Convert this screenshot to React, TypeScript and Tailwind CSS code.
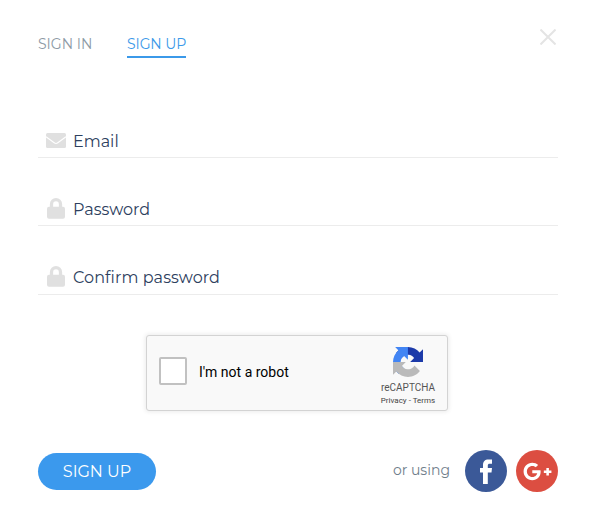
import type { ReactNode } from "react";
import { FaGooglePlusG } from "react-icons/fa";

function Field({ icon, label, className }: { icon: ReactNode; label: ReactNode; className: string }) {
  return (
    <label className={`flex items-start border-b border-[#ececec] pl-2 ${className}`}>
      <span className="flex h-[23px] w-5 shrink-0 items-center justify-center text-[#e0e0e0]">{icon}</span>
      <span className="mt-px ml-[7px] whitespace-nowrap text-base leading-6 text-[#2d405e]">{label}</span>
    </label>
  );
}

function EnvelopeIcon() {
  return (
    <svg viewBox="0 0 20 15" className="h-[15px] w-5">
      <rect width="20" height="15" rx="1.5" fill="currentColor" />
      <path d="M0 3.7l8.2 6.1q1.8 1.3 3.6 0L20 3.7" fill="none" stroke="white" strokeWidth="1.1" />
    </svg>
  );
}

function LockIcon() {
  return (
    <svg viewBox="0 0 18 21" className="h-[21px] w-[18px]">
      <rect y="8.7" width="18" height="12" rx="2" fill="currentColor" />
      <path d="M4.5 10V6.2a4.5 4.5 0 0 1 9 0V10" fill="none" stroke="currentColor" strokeWidth="3.3" />
    </svg>
  );
}

function RecaptchaLogo() {
  return (
    <svg viewBox="0 0 64 64" className="h-[30px] w-[30px]">
      <path fill="#1c3aa9" d="M64 31.955l-.033-1.37V4.687l-7.16 7.16C50.948 4.674 42.033.093 32.05.093c-10.4 0-19.622 4.96-25.458 12.64l11.736 11.86a15.55 15.55 0 0 1 4.754-5.334c2.05-1.6 4.952-2.906 8.968-2.906.485 0 .86.057 1.135.163 4.976.393 9.288 3.14 11.828 7.124l-8.307 8.307L64 31.953" />
      <path fill="#4285f4" d="M31.862.094l-1.37.033H4.594l7.16 7.16C4.58 13.147 0 22.06 0 32.046c0 10.4 4.96 19.622 12.64 25.458L24.5 45.768a15.55 15.55 0 0 1-5.334-4.754c-1.6-2.05-2.906-4.952-2.906-8.968 0-.485.057-.86.163-1.135.393-4.976 3.14-9.288 7.124-11.828l8.307 8.307L31.86.095" />
      <path fill="#bababa" d="M.001 32.045l.033 1.37v25.898l7.16-7.16c5.86 7.173 14.774 11.754 24.76 11.754 10.4 0 19.622-4.96 25.458-12.64l-11.736-11.86a15.55 15.55 0 0 1-4.754 5.334c-2.05 1.6-4.952 2.906-8.968 2.906-.485 0-.86-.057-1.135-.163-4.976-.393-9.288-3.14-11.828-7.124l8.307-8.307c-10.522.04-22.4.066-27.295-.005" />
    </svg>
  );
}

export default function App() {
  return (
    <main className="h-[518px] w-[595px] bg-white pr-[37px] pl-[38px] font-['Montserrat','Inter',sans-serif]">
      <header className="flex h-[90px] items-start pt-7">
        <nav className="flex gap-[34px] text-sm leading-[30px]">
          <button className="flex h-[30px] w-[55px] items-start pt-px whitespace-nowrap text-[#8d9aa5]">SIGN IN</button>
          <button className="flex h-[30px] w-[59px] items-start border-b-2 border-[#3b99e9] pt-px whitespace-nowrap tracking-[-0.1px] text-[#3b99e9]">SIGN UP</button>
        </nav>
        <button aria-label="Close" className="mr-[2px] ml-auto">
          <svg viewBox="0 0 16 16" className="mt-px h-4 w-4" stroke="#e4e4e4" strokeWidth="2">
            <path d="M.5.5l15 15M15.5.5l-15 15" />
          </svg>
        </button>
      </header>

      <form>
        <Field className="h-[68px] pt-[39px]" icon={<EnvelopeIcon />} label="Email" />
        <Field className="h-[68px] pt-[39px]" icon={<LockIcon />} label="Password" />
        <Field className="h-[69px] pt-[39px] tracking-[0.09px]" icon={<LockIcon />} label="Confirm password" />

        <div className="mt-10 ml-[108px] flex h-[76px] w-[302px] rounded-[3px] border border-[#d3d3d3] bg-[#f9f9f9] font-[Roboto] shadow-[0_0_4px_1px_rgba(0,0,0,0.08)]">
          <div className="flex items-center pb-1 pl-3">
            <span className="h-7 w-7 rounded-[2px] border-2 border-[#c1c1c1] bg-white" />
            <span className="mt-0.5 ml-3 text-sm text-black">I'm not a robot</span>
          </div>
          <div className="mr-[10px] ml-auto flex w-[58px] flex-col items-center pt-[11px] text-[#555]">
            <RecaptchaLogo />
            <span className="mt-[5px] text-[10px] leading-3">reCAPTCHA</span>
            <span className="mt-px text-[8px] leading-3 whitespace-nowrap text-[#444]">Privacy - Terms</span>
          </div>
        </div>

        <div className="mt-[39px] flex h-[42px] items-center">
          <button className="mt-px h-[37px] w-[118px] rounded-full bg-[#3b99ed] text-base text-white">SIGN UP</button>
          <span className="mb-0.5 ml-auto text-sm text-[#707e8b]">or using</span>
          <a className="ml-[15px] flex size-[42px] items-center justify-center rounded-full bg-[#3b5998] text-white">
            <svg viewBox="0 0 42 42" className="size-[42px]" fill="currentColor">
              <path d="M18 34V22.5h-3V18h3v-3c0-3.7 1.9-5.6 5.4-5.6H27v4.3h-2.3c-1.3 0-1.9.6-1.9 1.8V18H27l-.5 4.5h-3.7V34z" />
            </svg>
          </a>
          <a className="ml-[9px] flex size-[42px] items-center justify-center rounded-full bg-[#dc4e41] text-white">
            <FaGooglePlusG size={29} />
          </a>
        </div>
      </form>
    </main>
  );
}
